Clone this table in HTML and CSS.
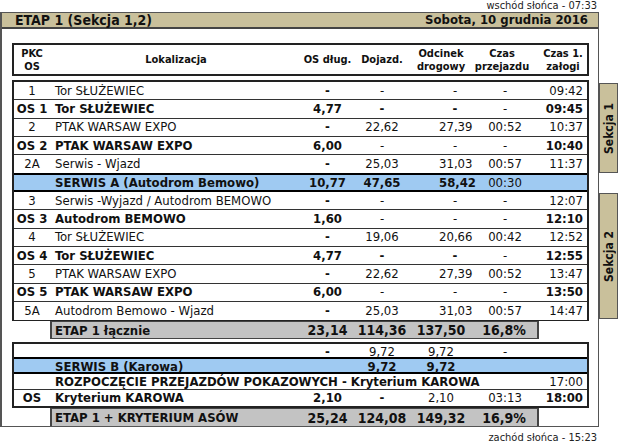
FILE: index.html
```html
<!DOCTYPE html>
<html lang="pl">
<head>
<meta charset="utf-8">
<title>ETAP 1</title>
<link rel="stylesheet" href="styles.css">
</head>
<body>
<div class="page">
  <div class="sun">wschód słońca - 07:33</div>
  <div class="main">
    <div class="frame">
      <div class="titlebar"><span>ETAP 1 (Sekcja 1,2)</span><span class="date">Sobota, 10 grudnia 2016</span></div>
      <div class="content">
        <div class="thead grid">
          <div>PKC<br>OS</div><div>Lokalizacja</div><div>OS dług.</div><div>Dojazd.</div><div>Odcinek<br>drogowy</div><div class="czph">Czas<br>przejazdu</div><div>Czas 1.<br>załogi</div>
        </div>

        <div class="box box1">
          <div class="row grid"><div class="pkc">1</div><div class="loc">Tor SŁUŻEWIEC</div><div class="osd">-</div><div class="c">-</div><div class="c odc">-</div><div class="c">-</div><div class="t">09:42</div></div>
          <div class="row grid os"><div class="pkc">OS 1</div><div class="loc">Tor SŁUŻEWIEC</div><div class="osd">4,77</div><div class="c">-</div><div class="c odc">-</div><div class="c n">-</div><div class="t">09:45</div></div>
          <div class="row grid"><div class="pkc">2</div><div class="loc">PTAK WARSAW EXPO</div><div class="osd">-</div><div class="c">22,62</div><div class="c odc">27,39</div><div class="c">00:52</div><div class="t">10:37</div></div>
          <div class="row grid os"><div class="pkc">OS 2</div><div class="loc">PTAK WARSAW EXPO</div><div class="osd">6,00</div><div class="c n">-</div><div class="c odc n">-</div><div class="c n">-</div><div class="t">10:40</div></div>
          <div class="row grid"><div class="pkc">2A</div><div class="loc">Serwis - Wjazd</div><div class="osd">-</div><div class="c">25,03</div><div class="c odc">31,03</div><div class="c">00:57</div><div class="t">11:37</div></div>
          <div class="row grid blue"><div class="pkc"></div><div class="loc b">SERWIS A (Autodrom Bemowo)</div><div class="osd">10,77</div><div class="c b">47,65</div><div class="c odc b">58,42</div><div class="c">00:30</div><div class="t"></div></div>
          <div class="row grid"><div class="pkc">3</div><div class="loc">Serwis -Wyjazd / Autodrom BEMOWO</div><div class="osd">-</div><div class="c">-</div><div class="c odc">-</div><div class="c">-</div><div class="t">12:07</div></div>
          <div class="row grid os"><div class="pkc">OS 3</div><div class="loc">Autodrom BEMOWO</div><div class="osd">1,60</div><div class="c n">-</div><div class="c odc n">-</div><div class="c n">-</div><div class="t">12:10</div></div>
          <div class="row grid"><div class="pkc">4</div><div class="loc">Tor SŁUŻEWIEC</div><div class="osd">-</div><div class="c">19,06</div><div class="c odc">20,66</div><div class="c">00:42</div><div class="t">12:52</div></div>
          <div class="row grid os"><div class="pkc">OS 4</div><div class="loc">Tor SŁUŻEWIEC</div><div class="osd">4,77</div><div class="c">-</div><div class="c odc">-</div><div class="c n">-</div><div class="t">12:55</div></div>
          <div class="row grid"><div class="pkc">5</div><div class="loc">PTAK WARSAW EXPO</div><div class="osd">-</div><div class="c">22,62</div><div class="c odc">27,39</div><div class="c">00:52</div><div class="t">13:47</div></div>
          <div class="row grid os"><div class="pkc">OS 5</div><div class="loc">PTAK WARSAW EXPO</div><div class="osd">6,00</div><div class="c n">-</div><div class="c odc n">-</div><div class="c n">-</div><div class="t">13:50</div></div>
          <div class="row grid"><div class="pkc">5A</div><div class="loc">Autodrom Bemowo - Wjazd</div><div class="osd">-</div><div class="c">25,03</div><div class="c odc">31,03</div><div class="c">00:57</div><div class="t">14:47</div></div>
        </div>

        <div class="total grid total1">
          <div></div><div class="g gl">ETAP 1 łącznie</div><div class="g c">23,14</div><div class="g c">114,36</div><div class="g c">137,50</div><div class="g c gr">16,8%</div><div></div>
        </div>

        <div class="box box2">
          <div class="row grid ra"><div class="pkc"></div><div class="loc"></div><div class="osd">-</div><div class="c">9,72</div><div class="c">9,72</div><div class="c">-</div><div class="t"></div></div>
          <div class="row grid blue rb"><div class="pkc"></div><div class="loc b">SERWIS B (Karowa)</div><div class="osd"></div><div class="c b">9,72</div><div class="c b">9,72</div><div class="c"></div><div class="t"></div></div>
          <div class="row grid rc"><div class="pkc"></div><div class="loc b wide">ROZPOCZĘCIE PRZEJAZDÓW POKAZOWYCH - Kryterium KAROWA</div><div class="t n">17:00</div></div>
          <div class="row grid os rd"><div class="pkc">OS</div><div class="loc">Kryterium KAROWA</div><div class="osd">2,10</div><div class="c">-</div><div class="c n">2,10</div><div class="c n">03:13</div><div class="t">18:00</div></div>
        </div>

        <div class="total grid total2">
          <div></div><div class="g gl">ETAP 1 + KRYTERIUM ASÓW</div><div class="g c">25,24</div><div class="g c">124,08</div><div class="g c">149,32</div><div class="g c gr">16,9%</div><div></div>
        </div>
      </div>
    </div>
    <div class="side">
      <div class="sek sek1"><span>Sekcja 1</span></div>
      <div class="sek sek2"><span>Sekcja 2</span></div>
    </div>
  </div>
  <div class="sun sunset">zachód słońca - 15:23</div>
</div>
</body>
</html>
```

FILE: styles.css
```css
* { box-sizing: border-box; margin: 0; padding: 0; }

body {
  width: 620px;
  height: 443px;
  overflow: hidden;
  background: #fff;
  color: #111;
  font-family: "DejaVu Sans Condensed", "DejaVu Sans", Verdana, sans-serif;
  font-size: 13px;
}

.page { display: flex; flex-direction: column; }

.sun {
  height: 12px;
  line-height: 12px;
  font-size: 11px;
  text-align: right;
  padding-right: 23px;
  color: #222;
}
.sunset { margin-top: 5px; }

.main { display: flex; align-items: flex-start; }

.frame {
  width: 599px;
  height: 415px;
  border: 1px solid #555;
  border-left-width: 2px;
  display: flex;
  flex-direction: column;
}

.titlebar {
  height: 16px;
  background: #c9c09b;
  border-bottom: 2px solid #444;
  display: flex;
  justify-content: space-between;
  align-items: center;
  padding: 0 10px 0 13px;
  font-weight: bold;
  font-size: 14px;
  line-height: 14px;
}
.titlebar .date { font-size: 13px; }

.content { padding-left: 10px; display: flex; flex-direction: column; }

.grid {
  display: grid;
  grid-template-columns: 36px 252px 51px 58px 60px 68px 48px;
  align-items: center;
}

.thead {
  margin-top: 14px;
  width: 577px;
  height: 33px;
  border: 2px solid #222;
  font-weight: bold;
  font-size: 11px;
  line-height: 13px;
  text-align: center;
}
.thead .czph { padding-right: 6px; }

.box {
  width: 577px;
  border: 2px solid #222;
}
.box1 { margin-top: 4px; border-bottom-width: 1px; }
.box2 { margin-top: 6px; }

.row {
  height: 18.33px;
  line-height: 16px;
  border-bottom: 1px solid #333;
  white-space: nowrap;
}
.box .row:last-child { border-bottom: 0; }

.pkc { text-align: center; }
.loc { padding-left: 5px; }
.osd { text-align: center; font-weight: bold; }
.c { text-align: center; }
.t { text-align: right; padding-right: 4px; }
.box1 .odc { padding-left: 28px; }

.os .pkc, .os .loc, .os .osd, .os .t, .os .c { font-weight: bold; }
.os .n, .n { font-weight: normal; }
.b { font-weight: bold; }

.blue {
  background: #9fcaf2;
  border-top: 2px solid #000;
  border-bottom: 2px solid #000 !important;
  margin-top: -1px;
  height: 19.33px;
}

.wide { grid-column: 2 / 7; }

.box2 .ra { height: 14px; }
.box2 .rb { height: 17px; }
.box2 .rc { height: 16px; }
.box2 .rd { height: 16px; }

.total {
  margin-left: 2px;
  width: 573px;
  font-weight: bold;
  font-size: 14px;
  align-items: stretch;
}
.total1 { height: 15px; }
.total2 { height: 18px; }
.total .g {
  background: #c3c3c3;
  border-top: 1px solid #444;
  border-bottom: 1px solid #444;
  display: flex;
  align-items: center;
  justify-content: center;
}
.total .gl { justify-content: flex-start; padding-left: 3px; border-left: 2px solid #444; font-size: 13px; }
.total .gr { border-right: 2px solid #444; }
.total2 .g { border-bottom: 0; }

.side { display: flex; flex-direction: column; width: 19px; }

.sek {
  width: 19px;
  background: #c9c09b;
  border: 1px solid #555;
  display: flex;
  align-items: center;
  justify-content: center;
  font-weight: bold;
  font-size: 12px;
}
.sek span { writing-mode: vertical-rl; transform: rotate(180deg); }
.sek1 { margin-top: 71px; height: 90px; }
.sek2 { margin-top: 20px; height: 126px; }
```
